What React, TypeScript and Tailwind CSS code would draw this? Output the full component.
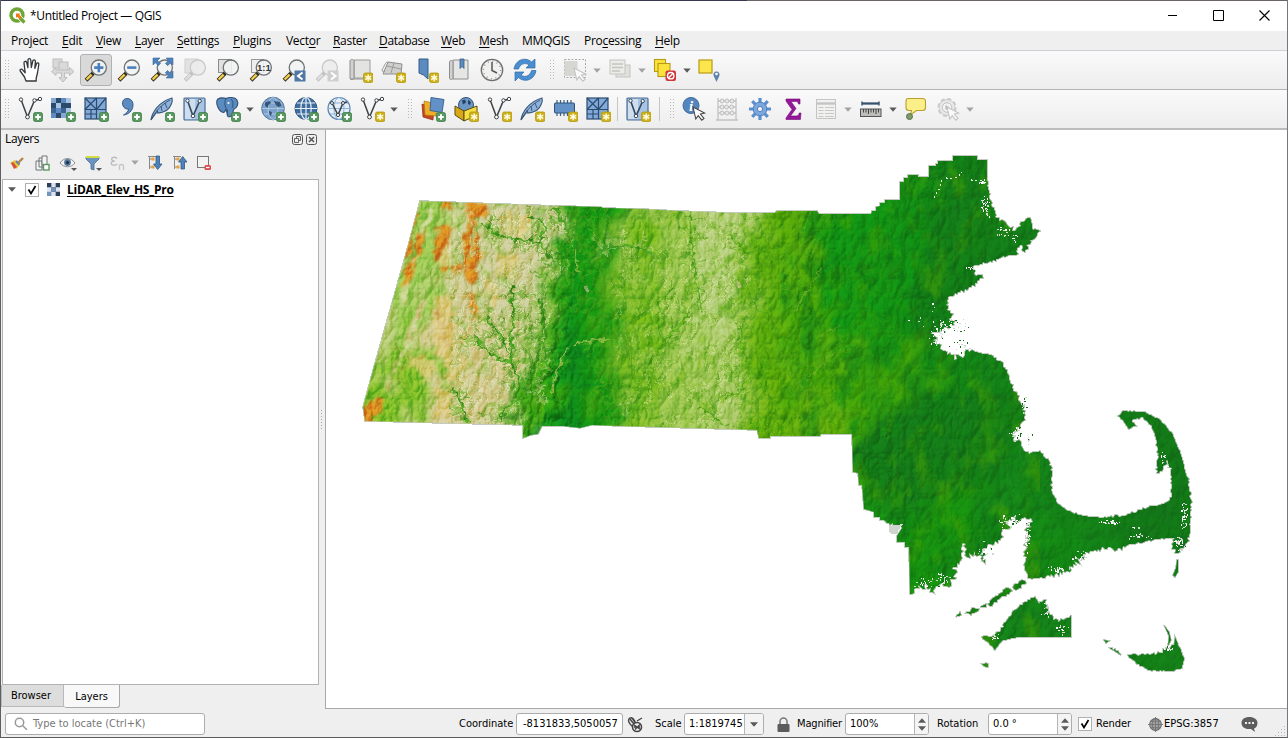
import React from "react";

/* ---------- small drawing helpers ---------- */
type P = { children?: React.ReactNode };
const Ico = ({ children }: P) => (
  <svg width="26" height="26" viewBox="0 0 26 26" fill="none" className="shrink-0">{children}</svg>
);
const Plus = () => (
  <g>
    <rect x="16.5" y="16.5" width="9" height="9" rx="1.8" fill="#5a9a62" stroke="#3f7d49" strokeWidth=".8" />
    <path d="M21 18.2v5.6M18.2 21h5.6" stroke="#fff" strokeWidth="2" />
  </g>
);
const Star = () => (
  <g>
    <rect x="16.5" y="16" width="9.5" height="9.5" rx="1.8" fill="#cdb01a" stroke="#b3980c" strokeWidth=".8" />
    <path d="M21.2 17.4v6.8M18.2 19.1l6 3.4M24.2 19.1l-6 3.4" stroke="#fffbe0" strokeWidth="1.5" />
  </g>
);
const Lens = ({ dim }: { dim?: boolean }) => (
  <g>
    <path d="M10.2 16.2L3 23.2" stroke={dim ? "#c4c4c4" : "#3b3420"} strokeWidth="4" />
    <path d="M8.6 17.6L3.6 22.5" stroke={dim ? "#dedede" : "#f2cf4b"} strokeWidth="2.4" />
    <path d="M11.2 15.2l-2 2" stroke={dim ? "#bbb" : "#222"} strokeWidth="2.6" />
    <circle cx="15.8" cy="10.6" r="7.6" fill={dim ? "#ececec" : "#f1f3f2"} fillOpacity=".88" stroke={dim ? "#c9c9c9" : "#6e7274"} strokeWidth="1.3" />
  </g>
);
const VNodes = ({ c = "#3d4246" }: { c?: string }) => (
  <g stroke={c}>
    <path d="M4 3.5L10.5 21L17.5 4.5L23 3.2" strokeWidth="1.5" />
    <g fill="#fff" strokeWidth="1"><circle cx="4" cy="3.6" r="1.7" /><circle cx="17.5" cy="4.4" r="1.7" /><circle cx="23" cy="3" r="1.7" /><circle cx="10.5" cy="21" r="1.9" /></g>
  </g>
);
const Checker = () => (
  <g>
    <rect x="1" y="2" width="20" height="20" fill="#86a8d2" />
    <path d="M6 2h5v5H6zM1 7h5v5H1zM11 7h5v5h-5zM6 17h5v5H6zM16 7h5v5h-5z" fill="#2c4a6c" />
    <path d="M11 2h5v5h-5zM6 12h5v5H6zM1 17h5v5H1z" fill="#5d8bc2" />
    <path d="M6 7h5v5H6zM16 12h5v5h-5zM16 2h5v5h-5z" fill="#a9c3e3" />
    <path d="M1 12h5v5H1zM11 12h5v5h-5z" fill="#3d6594" />
  </g>
);
const Mesh = () => (
  <g stroke="#2b4c6f" strokeWidth="1.2">
    <rect x="2" y="2" width="21" height="21" fill="#82a9d8" />
    <path d="M2 13.5h21M13.5 2v21M2 2l11.5 11.5M13.5 2L2 13.5M13.5 13.5L23 2M8 13.5V23M2 18h11.5" />
  </g>
);
const Feather = () => (
  <g>
    <path d="M2 24C3 17 9 6 23 2c1 3-1 9-5 12-4 3-8 3-11 3z" fill="#8fb2dc" stroke="#3a5a7c" strokeWidth="1.1" />
    <path d="M2 24C7 15 12 9 21 4M8 14l1 3M12 10l1 5M16 7l2 5" stroke="#35506e" strokeWidth=".9" />
  </g>
);
const Globe = ({ fill = "#4c79ad", line = "#e5eefa" }: { fill?: string; line?: string }) => (
  <g>
    <circle cx="13" cy="12.5" r="11" fill={fill} stroke="#35597f" strokeWidth="1" />
    <g stroke={line} strokeWidth="1.2"><ellipse cx="13" cy="12.5" rx="5.2" ry="11" /><path d="M2 12.500h22M13 1.500v22M4 7h18M4 18h18" /></g>
  </g>
);
const VBox = () => (
  <g>
    <rect x="2" y="2" width="21" height="22" rx="1" fill="#a9c4e2" stroke="#4a6f97" strokeWidth="1.2" />
    <path d="M3 3h10v20H3z" fill="#cfdeee" />
    <path d="M5.500 4.500L11 20L17.500 5.500" stroke="#33485c" strokeWidth="1.6" />
    <g fill="#fff" stroke="#33485c"><circle cx="5.5" cy="4.7" r="1.7" /><circle cx="17.7" cy="5" r="1.7" /><circle cx="11" cy="20" r="1.8" /></g>
  </g>
);
const Pointer = ({ dim }: { dim?: boolean }) => (
  <path d="M12 11l2.8 12 2.4-3.4 3.6 4.6 2.2-1.8-3.6-4.4 4.2-1z" fill={dim ? "#fafafa" : "#fff"} stroke={dim ? "#c2c2c2" : "#444"} strokeWidth="1.1" />
);

const Hand = () => (
  <Ico>
    <path d="M9 24l-1.5-4L3.2 14c-.8-1.6 1.2-2.6 2.4-1.2l2.6 3L7 6c-.2-2 2.2-2.4 2.7-.5l1.2 5.2L11 3.200c0-2 2.600-2 2.800 0l.5 7.300L15.800 4c.4-1.800 2.700-1.400 2.600.4l-.6 7 1.700-4.600c.6-1.600 2.600-1 2.300.7L20.500 16l-1.300 5v3z" fill="#fff" stroke="#33383b" strokeWidth="1.3" strokeLinejoin="round" />
  </Ico>
);
const PanSel = () => (
  <Ico>
    <g stroke="#bdbdbd" fill="#d9d9d9" strokeWidth="1"><rect x="3" y="2" width="9" height="9" /><rect x="9" y="5" width="9" height="9" />
      <path d="M13 25l-4-4.500h2.500V16H6v2.500L1.500 14.500L6 10.500V13h13.500v-2.500l4.500 4-4.500 4V16H14.500v4.500H17z" /></g>
  </Ico>
);
const ZoomIn = () => (<Ico><Lens /><path d="M15.800 6v9.200M11.200 10.600h9.200" stroke="#4a7fbd" strokeWidth="2.600" /></Ico>);
const ZoomOut = () => (<Ico><Lens /><path d="M11.200 10.600h9.200" stroke="#4a7fbd" strokeWidth="2.600" /></Ico>);
const ZoomFull = () => (
  <Ico><Lens />
    <g fill="#4f82ba" stroke="#3d6a9c" strokeWidth=".6"><path d="M4 1h7L8.600 3.400l3 3-2.300 2.300-3-3L4 8z" /><path d="M24 1v7l-2.300-2.300-3 3-2.300-2.300 3-3L17 1z" /><path d="M24 21h-7l2.300-2.300-3-3 2.300-2.300 3 3L24 14z" /></g>
  </Ico>
);
const ZoomSel = () => (<Ico><rect x="3" y="2" width="13" height="14" fill="#e2e2e2" stroke="#cfcfcf" /><Lens dim /></Ico>);
const ZoomLayer = () => (<Ico><rect x="3.500" y="2.500" width="13" height="13" fill="#e0e0de" stroke="#8b8b8b" /><Lens /></Ico>);
const ZoomNative = () => (
  <Ico><rect x="3.500" y="2.500" width="12" height="13" fill="#eee" stroke="#999" /><Lens />
    <text x="15.900" y="14.200" textAnchor="middle" fontFamily="Liberation Sans, sans-serif" fontSize="9.500" fontWeight="bold" fill="#333">1:1</text></Ico>
);
const ZoomLast = () => (<Ico><Lens /><rect x="13.500" y="13.500" width="11" height="11" fill="#4f78a5" /><path d="M21.500 15.500l-4.500 3.500 4.500 3.500" stroke="#fff" strokeWidth="2" /></Ico>);
const ZoomNext = () => (<Ico><Lens dim /><rect x="13.500" y="13.500" width="11" height="11" fill="#cfcfcf" /><path d="M17 15.500l4.500 3.500-4.500 3.500" stroke="#fff" strokeWidth="2" /></Ico>);
const NewMap = () => (<Ico><path d="M7 3h16v18H7z" fill="#e3e3e1" stroke="#9b9b9b" /><path d="M3 4c0-2 4-2 4 0v17c0 2-4 2-4 0z" fill="#d2d2d0" stroke="#8e8e8e" /><path d="M3 22h13" stroke="#8e8e8e" /><Star /></Ico>);
const New3D = () => (<Ico><path d="M8 5l14 2-1 10-18 0z" fill="#cfcfcd" stroke="#8e8e8e" /><path d="M8 5c-3 0-4 5-6 8 0 2 2 2 3 1M7 9l14 3M14 6l-3 10" stroke="#9a9a9a" /><Star /></Ico>);
const NewBookmark = () => (<Ico><path d="M6 2h9v20l-4.500-4-4.500-2z" fill="#5c8bc0" stroke="#355d88" /><Star /></Ico>);
const Bookmarks = () => (<Ico><path d="M7 3h15v19H7z" fill="#e6e6e4" stroke="#8e8e8e" /><path d="M3.500 5c0-2 3.500-2 3.500 0v16c0 2-3.500 2-3.500 0z" fill="#d2d2d0" stroke="#8e8e8e" /><path d="M14 2h4v9.500l-2-2-2 2z" fill="#5c8bc0" stroke="#355d88" strokeWidth=".8" /></Ico>);
const Clock = () => (<Ico><circle cx="13" cy="13" r="10.700" fill="#f0f0ee" stroke="#6d6f70" strokeWidth="1.300" /><circle cx="13" cy="13" r="8.700" stroke="#9a9a9a" strokeDasharray="1 3.550" strokeWidth="1.500" /><path d="M13 5v8.500l5 2.500" stroke="#555" strokeWidth="1.500" /></Ico>);
const Refresh = () => (
  <Ico><g fill="#4a8ed0" stroke="#2d6aa8" strokeWidth=".7"><path d="M2 12C3 5 9 1 15 2.500c2 .5 3.500 1.500 4.500 2.500L23 2v9h-9l3-3C13 5 8 7 6.500 12z" /><path d="M24 13.500c-1 7-7 11-13 9.500-2-.5-3.500-1.500-4.500-2.500L3 24v-9h9l-3 3c4 3 9 1 10.500-4.500z" /></g></Ico>
);
const SelectDim = () => (<Ico><rect x="2.500" y="2.500" width="21" height="18" stroke="#aaa" strokeDasharray="2 1.500" /><rect x="2.500" y="4" width="13" height="15" fill="#d6d6d2" /><Pointer dim /></Ico>);
const FormDim = () => (<Ico><rect x="9" y="8" width="14" height="12" fill="#e0e0dc" stroke="#c4c4c0" /><rect x="3" y="3" width="15" height="14" fill="#ebebe8" stroke="#c4c4c0" /><path d="M5 7h11M5 10.500h11M5 14h8" stroke="#c4c4c0" strokeWidth="1.300" /></Ico>);
const Deselect = () => (
  <Ico><g fill="#fbe33c" stroke="#b79b16" strokeWidth="1.100"><rect x="2.500" y="2.500" width="11" height="12" /><rect x="6" y="6.500" width="12" height="13" /></g>
    <rect x="13.500" y="13.500" width="10.500" height="10.500" rx="2" fill="#d0353a" /><circle cx="18.700" cy="18.700" r="3.200" stroke="#fff" strokeWidth="1.400" /><path d="M16.500 21l4.500-4.500" stroke="#fff" strokeWidth="1.300" /></Ico>
);
const SelLoc = () => (<Ico><rect x="3" y="3" width="13" height="13" fill="#fde64b" stroke="#b79b16" strokeWidth="1.200" /><path d="M20.500 25l-2.800-6a3.100 3.100 0 1 1 5.600 0z" fill="#5f84a8" /><circle cx="20.500" cy="17" r="1.300" fill="#fff" /></Ico>);

const VPlus = () => (<Ico><VNodes /><Plus /></Ico>);
const VStar = () => (<Ico><VNodes /><Star /></Ico>);
const RasterPlus = () => (<Ico><Checker /><Plus /></Ico>);
const MeshPlus = () => (<Ico><Mesh /><Plus /></Ico>);
const MeshStar = () => (<Ico><Mesh /><Star /></Ico>);
const Comma = () => (<Ico><path d="M8 3.500c4-2.500 9.500 0 9 6C16.500 15.500 12 18.500 7.500 19c3-1.800 5-3.500 5-6C7.500 14 4.500 7 8 3.500z" fill="#5c8bc0" stroke="#355d88" /><Plus /></Ico>);
const FeatherPlus = () => (<Ico><Feather /><Plus /></Ico>);
const FeatherStar = () => (<Ico><Feather /><Star /></Ico>);
const VBoxPlus = () => (<Ico><VBox /><Plus /></Ico>);
const VBoxStar = () => (<Ico><VBox /><Star /></Ico>);
const Elephant = () => (
  <Ico><path d="M3 3c3-2 6-1 8-.5C14 1 20 1 22 4c2 4 0 8-3 9-1 1-1 2-1 4l-2 3c-3 2-4 0-4-3l-1-4c-1 3-2 4-4 3C3 14 0 6 3 3z" fill="#5c8bc0" stroke="#2f5278" strokeWidth="1.100" /><path d="M11 3c-2 3-1 7 0 9M16 3c3 3 2 7 1 9M12 13c1 2 0 5 1 6" stroke="#2f5278" /><circle cx="13.500" cy="7" r="1" fill="#fff" /><Plus /></Ico>
);
const GlobeMap = () => (
  <Ico><circle cx="13" cy="12.500" r="11.300" fill="#7ea3cb" stroke="#4f779f" /><g stroke="#b9d0e6" strokeWidth=".8"><ellipse cx="13" cy="12.500" rx="5" ry="11" /><path d="M2 12.500h22M4 7h18M4 18h18" /></g>
    <path d="M5 6.500l5-1.500 1 2-2.500 2-1 3-2.500-2.500zM14 5l6 1 1.500 4-3.500 1-2.500-2.500zM9 15l3 1-1 4-1.500-1z" fill="#35557a" /><Plus /></Ico>
);
const GlobePlus = () => (<Ico><Globe fill="#3f6d9d" line="#e8f0f8" /><Plus /></Ico>);
const GlobeV = () => (<Ico><circle cx="13" cy="12.500" r="11" fill="#e6eff7" stroke="#5d88b5" strokeWidth="1.200" /><g stroke="#8fb2d6"><ellipse cx="13" cy="12.500" rx="5" ry="11" /><path d="M2 12.500h22M4 7h18M4 18h18" /></g><path d="M6 7l6 12 5-12 4-1" stroke="#3a4248" strokeWidth="1.500" /><g fill="#fff" stroke="#3a4248"><circle cx="6" cy="7" r="1.500" /><circle cx="17" cy="7" r="1.500" /><circle cx="12" cy="19" r="1.600" /></g><Plus /></Ico>);
const Sources = () => (<Ico><path d="M2 8l12 3-1 13-10-3z" fill="#c8451f" stroke="#8b2d12" strokeWidth=".7" /><path d="M4 5l13 3-1 12-11-1z" fill="#f0ae28" stroke="#a77713" strokeWidth=".7" /><path d="M11 1.500l13 2-2 13-12-2z" fill="#6291c8" stroke="#355d88" strokeWidth=".9" /><Plus /></Ico>);
const Geopkg = () => (<Ico><circle cx="13" cy="9" r="7.500" fill="#6e97c6" stroke="#2f5278" /><path d="M9 4.500l3-1 1 3-3 2zM15 4l3 2-1 3-2-1z" fill="#24405f" /><path d="M2 10l9 5v10l-9-6z" fill="#d8a816" stroke="#5a4a10" /><path d="M11 15l13-5v9l-13 6z" fill="#f6de45" stroke="#5a4a10" /><Star /></Ico>);
const Chip = () => (<Ico><path d="M5 4v16M8.500 4v16M12 4v16M15.500 4v16M19 4v16" stroke="#3f5f80" strokeWidth="1.200" /><rect x="2.500" y="7" width="20" height="10" rx="1" fill="#6291c8" stroke="#2f5278" /><Star /></Ico>);
const Identify = () => (<Ico><circle cx="10" cy="9.500" r="8" fill="#5585bd" stroke="#3d6a9c" /><text x="10" y="14.800" textAnchor="middle" fontFamily="Liberation Serif, serif" fontStyle="italic" fontWeight="bold" fontSize="15" fill="#fff">i</text><Pointer /></Ico>);
const Abacus = () => (<Ico><path d="M4 2v22M22 2v22M2 24h22M4 5h18M4 11h18M4 17h18" stroke="#c2c2c2" strokeWidth="1.300" /><g fill="#e8e8e8" stroke="#bdbdbd"><circle cx="8" cy="5" r="2" /><circle cx="13" cy="5" r="2" /><circle cx="18" cy="5" r="2" /><circle cx="8" cy="11" r="2" /><circle cx="12.500" cy="11" r="2" /><circle cx="17.500" cy="11" r="2" /><circle cx="8" cy="17" r="2" /><circle cx="13" cy="17" r="2" /><circle cx="18" cy="17" r="2" /></g></Ico>);
const Gear = () => (
  <Ico><g stroke="#5c8fd0" strokeWidth="3.200"><path d="M13 2v22M2 13h22M5.200 5.200l15.600 15.600M20.800 5.200L5.200 20.800" /></g><circle cx="13" cy="13" r="6.900" fill="#7ba7de" stroke="#4f80bd" /><circle cx="13" cy="13" r="2.600" fill="#f4f4f4" stroke="#4f80bd" /></Ico>
);
const Sigma = () => (<Ico><path d="M6 3h14v5h-1.500c-.3-2-1-2.500-3-2.500H11l5 7-5.500 7.500H16c2 0 2.800-.8 3.200-3H21l-.6 6.500H6V22l6-8.500L6 5z" fill="#97179b" stroke="#6e0f73" strokeWidth=".6" /></Ico>);
const TableDim = () => (<Ico><rect x="3.500" y="3.500" width="19" height="19" fill="#f1f1f0" stroke="#c4c4c4" /><path d="M3.500 7.500h19" stroke="#c4c4c4" strokeWidth="2.400" /><path d="M5.500 11.500h5M12 11.500h9M5.500 14.500h5M12 14.500h9M5.500 17.500h5M12 17.500h9M5.500 20.500h5M12 20.500h9" stroke="#c8c8c8" /></Ico>);
const Ruler = () => (<Ico><path d="M4 7.500h17M4 5.500v4M21 5.500v4" stroke="#36516e" strokeWidth="1.400" /><path d="M4 7.500h17" stroke="#36516e" strokeWidth="2" /><rect x="2.500" y="13" width="20.500" height="7.500" fill="#bdbdbb" stroke="#555" /><path d="M5.500 13v3.500M8 13v3.500M10.500 13v5M13 13v3.500M15.500 13v3.500M18 13v5M20.500 13v3.500" stroke="#444" /></Ico>);
const Tip = () => (<Ico><path d="M6 2.500h14.500c2 0 3 1 3 3v6c0 2-1 3-3 3h-6L8.500 19l1-4.500H7c-2 0-3-1-3-3v-6c0-2 0-3 2-3z" fill="#fbef8a" stroke="#b9a02c" strokeWidth="1.100" /><circle cx="7.500" cy="20.500" r="3" fill="#7d9b6c" stroke="#55744a" /></Ico>);
const GearDim = () => (<Ico><circle cx="12" cy="11.500" r="8.500" fill="#e6e6e6" stroke="#cacaca" strokeWidth="2.200" strokeDasharray="4 2.670" /><circle cx="12" cy="11.500" r="7.800" fill="#e9e9e9" stroke="#c9c9c9" strokeWidth=".8" /><circle cx="12" cy="11.500" r="4.800" fill="#f3f3f3" stroke="#bfbfbf" /><path d="M10.500 9l4 2.500-4 2.500z" fill="#b5b5b5" /><Pointer dim /></Ico>);

/* ---------- toolbar pieces ---------- */
const Slot = ({ children, on }: P & { on?: boolean }) => (
  <div className="flex h-[34px] w-[33px] shrink-0 items-center justify-center">
    <div className={on ? "flex h-8 w-8 items-center justify-center rounded-[3px] border border-[#b1b1b1] bg-[#d9d9d9]" : "flex h-8 w-8 items-center justify-center"}>{children}</div>
  </div>
);
const Arrow = ({ w, dim }: { w: string; dim?: boolean }) => (
  <div className={`flex shrink-0 justify-center ${w}`}>
    <svg width="8" height="5" viewBox="0 0 8 5"><path d="M.3.500h7.400L4 4.700z" fill={dim ? "#a3a3a3" : "#5a5a5a"} /></svg>
  </div>
);
const Grip = ({ w }: { w: string }) => (
  <div className={`flex shrink-0 justify-center ${w}`}>
    <svg width="5" height="20" viewBox="0 0 5 20">
      {Array.from({ length: 7 }, (_, i) => <path key={i} d={`M0 ${i * 3}h1v1H0zM3 ${i * 3}h1v1H3z`} fill="#b8b8b8" />)}
    </svg>
  </div>
);
const Sep = ({ w }: { w: string }) => (<div className={`flex shrink-0 justify-center ${w}`}><div className="h-6 w-px bg-[#c6c6c6]" /></div>);

/* ---------- terrain ---------- */
function rng(seed: number) {
  let a = seed;
  return () => {
    a = (a + 0x6d2b79f5) | 0;
    let t = Math.imul(a ^ (a >>> 15), 1 | a);
    t = (t + Math.imul(t ^ (t >>> 7), 61 | t)) ^ t;
    return ((t ^ (t >>> 14)) >>> 0) / 4294967296;
  };
}
type Pt = number[];
/* third number of a point: how ragged the edge that follows it is */
function outline(pts: Pt[], seed: number) {
  const r = rng(seed);
  let d = "";
  pts.forEach((p, i) => {
    const q = pts[(i + 1) % pts.length];
    d += (i ? "L" : "M") + p[0] + " " + p[1];
    const amp = p[2] || 0;
    if (!amp) return;
    const dx = q[0] - p[0], dy = q[1] - p[1], len = Math.hypot(dx, dy);
    const n = Math.floor(len / 1.7);
    for (let k = 1; k < n; k++) {
      const o = (r() - 0.5) * 2 * amp, t = k / n;
      d += "L" + Math.round(p[0] + dx * t - (dy / len) * o) + " " + Math.round(p[1] + dy * t + (dx / len) * o);
    }
  });
  return d + "Z";
}
const mainland: Pt[] = [
  [420, 201], [530, 205], [601, 207], [603, 208], [643, 209], [680, 211], [735, 213], [775, 213], [777, 211], [817, 211], [819, 214], [871, 214], [872, 211], [876, 211], [876, 207], [880, 206], [880, 203], [885, 203], [885, 200], [900, 200], [900, 182], [904, 182], [904, 178], [908, 178], [908, 175], [918, 175], [918, 177], [929, 177], [929, 166], [936, 166], [936, 164], [938, 164], [938, 161], [953, 161], [953, 156], [977, 156], [977, 160], [987, 160],
  [987, 180, 1], [990, 200, 1.5], [997, 218, 2], [1007, 225, 2], [1015, 231, 2], [1021, 222, 1], [1030, 218, 1], [1032, 228, 2], [1040, 231, 1.5], [1036, 237, 2], [1030, 240, 2], [1025, 252, 2], [1020, 245, 2], [1016, 255, 1], [1000, 258, 1.2], [987, 263, 1.5], [970, 267, 2], [974, 274, 1.5], [982, 275, 2], [977, 283, 1.5], [967, 290, 1.5], [955, 293, 2], [948, 299, 2.5], [950, 313, 4], [954, 325, 4], [937, 328, 4], [933, 340, 4], [947, 352, 4], [957, 359, 4], [968, 350, 2], [977, 352, 1], [993, 356, 1.5], [1003, 363, 1.5], [1008, 374, 1], [1010, 383, 1.5], [1017, 395, 1.5], [1024, 408, 2.5], [1025, 420, 2], [1012, 434, 3], [1023, 449, 2], [1031, 453, 0.5], [1040, 451, 1], [1049, 461, 1], [1052, 473, 1], [1051, 490, 1], [1057, 503, 0.8], [1068, 511, 0.8], [1083, 516, 0.6], [1103, 518, 1.2], [1127, 515, 1], [1147, 508, 1], [1167, 502, 1], [1172, 497, 1], [1171, 470, 2], [1167, 460, 1.5], [1162, 471, 1], [1157, 473, 1], [1158, 450, 0.8], [1156, 437, 0.8], [1151, 425, 0.8], [1143, 417, 0.8], [1132, 420, 1], [1136, 426, 0.6], [1129, 429, 0.6], [1124, 422, 0.6], [1118, 416, 0.5], [1123, 411, 0.3], [1143, 412, 0.5], [1160, 420, 0.5], [1172, 433, 0.5], [1180, 453, 0.5], [1187, 477, 1.5], [1191, 507, 1], [1190, 533, 1.5], [1187, 542, 2], [1178, 553, 3], [1173, 546, 2], [1175, 538, 1], [1153, 540, 1], [1133, 544, 2], [1117, 550, 3], [1112, 548, 2], [1090, 551, 3], [1080, 559, 4], [1067, 571, 2.5], [1050, 576, 1.5], [1028, 578, 1.5], [1025, 570, 2], [1026, 543, 4], [1031, 518, 4], [1020, 520, 4], [1009, 519, 4], [1003, 537, 4], [988, 544, 2], [982, 552, 3], [985, 563, 3], [974, 551, 3], [967, 557, 2], [963, 541, 1], [961, 560, 3], [953, 567, 3], [956, 578, 3], [946, 586, 3], [936, 586, 2], [934, 593, 3], [926, 584, 4], [912, 594], [910, 594], [909, 547], [905, 547], [905, 542], [897, 542], [897, 536], [902, 528, 2], [889, 523, 1], [884, 520], [880, 520], [880, 517], [874, 517], [874, 512], [864, 509], [862, 485], [859, 485], [858, 473], [853, 472], [852, 434], [821, 434], [820, 436], [770, 436], [770, 438], [759, 438], [757, 430], [690, 428], [620, 426], [592, 425], [580, 428], [563, 426], [542, 426], [538, 434], [531, 435], [523, 438], [523, 425], [365, 421], [363, 407], [375, 363], [405, 257],
];
const islands: Pt[][] = [
  [[1035, 597, 1], [1039, 604, 1.5], [1046, 600, 2], [1047, 613, 2], [1058, 622, 2], [1064, 620, 1], [1071, 615], [1071, 637, 0.5], [1020, 637, 0.5], [1003, 640, 1], [995, 650, 1], [990, 645, 1], [982, 637, 0.8], [993, 636, 2], [1001, 630, 1], [1007, 620, 0.8], [1015, 610, 0.8], [1025, 602, 1]],
  [[1128, 655, 1.2], [1157, 654, 2.5], [1170, 648, 1], [1177, 642, 0.5], [1184, 658, 0.5], [1182, 668, 0.5], [1174, 671, 0.5], [1150, 670, 0.5], [1137, 664, 0.5]],
  [[988, 604, 1.2], [995, 597, 1.2], [1008, 588, 1.2], [1012, 591, 1.2], [999, 599, 1.2], [990, 606, 1]],
  [[1013, 587, 1], [1022, 580, 1.5], [1026, 583, 1], [1016, 590, 1]],
  [[966, 613, 1], [974, 608, 1], [979, 609, 1], [971, 615, 1]],
  [[956, 617, 1], [960, 612, 1], [961, 615, 1]],
  [[980, 607, 0.5], [986, 604, 0.5], [986, 607, 0.5]],
  [[982, 664, 1], [988, 664, 1], [988, 667, 1]],
  [[1173, 575], [1176, 568], [1177, 560], [1178, 560], [1178, 572], [1175, 577]],
  [[1164, 625], [1169, 632], [1171, 640], [1168, 646], [1169, 636]],
  [[1175, 637], [1178, 644], [1174, 646]],
  [[1104, 640], [1109, 641], [1106, 643]],
  [[1110, 648, 1], [1118, 651, 1], [1121, 655, 0.5]],
];
const landPath = outline(mainland, 7) + islands.map((p, i) => outline(p, 20 + i)).join("");

/* a river and its side branches */
function tree(pts: Pt[], seed: number, reach: number, gap = 4) {
  const r = rng(seed);
  let d = "M" + pts.map((p) => p.join(" ")).join("L");
  const grow = (x: number, y: number, a: number, n: number, depth: number) => {
    d += `M${x.toFixed(1)} ${y.toFixed(1)}`;
    for (let i = 0; i < n; i++) {
      a += (r() - 0.5) * 0.9;
      x += Math.cos(a) * 2.5; y += Math.sin(a) * 2.5;
      d += `L${x.toFixed(1)} ${y.toFixed(1)}`;
      if (depth > 0 && r() < 0.3) {
        grow(x, y, a + (r() < 0.5 ? -0.8 : 0.8), Math.ceil(n * 0.5), depth - 1);
        d += `M${x.toFixed(1)} ${y.toFixed(1)}`;
      }
    }
  };
  for (let i = 0; i < pts.length - 1; i++) {
    const [x1, y1] = pts[i], [x2, y2] = pts[i + 1];
    const len = Math.hypot(x2 - x1, y2 - y1), a = Math.atan2(y2 - y1, x2 - x1);
    for (let s = 0; s < len; s += gap) grow(x1 + ((x2 - x1) * s) / len, y1 + ((y2 - y1) * s) / len, a + (r() < 0.5 ? -1 : 1) * (1.8 + r() * 0.6), 1 + Math.floor((r() * reach) / 2.5), 1);
  }
  return d;
}
const rivers = [
  [[482, 222], [493, 232], [506, 238], [517, 240], [528, 239], [540, 243], [550, 257], [558, 264], [566, 274]],
  [[540, 241], [546, 228], [540, 221], [527, 216]],
  [[557, 210], [562, 220], [568, 230], [570, 243]],
  [[475, 337], [483, 347], [492, 354], [503, 360], [512, 364], [518, 378], [524, 392]],
  [[513, 285], [512, 300], [514, 318], [511, 340], [512, 364]],
  [[487, 318], [493, 328], [500, 335], [508, 350]],
  [[653, 252], [640, 248], [625, 246], [613, 245], [604, 250], [594, 260]],
  [[541, 300], [544, 320], [540, 345], [534, 370]],
  [[455, 390], [462, 403], [468, 421]],
  [[500, 421], [506, 408], [520, 398]],
];
const eastRivers = [
  [[690, 313], [680, 325], [668, 338], [654, 355], [643, 375]],
  [[691, 212], [692, 250], [698, 290], [702, 312]],
  [[730, 235], [745, 252], [760, 250], [774, 266], [785, 280]],
  [[600, 382], [620, 384], [638, 388], [652, 391], [652, 368]],
  [[700, 408], [715, 418], [726, 427]],
  [[752, 300], [768, 320], [776, 342], [790, 362], [800, 385], [804, 425]],
  [[737, 395], [750, 375], [765, 358], [790, 362]],
  [[740, 330], [745, 355], [758, 380]],
  [[662, 340], [657, 320], [660, 300], [672, 290]],
  [[806, 220], [800, 250], [795, 280], [790, 310]],
  [[800, 385], [815, 360], [835, 352], [850, 350]],
  [[628, 330], [632, 360], [636, 400], [640, 424]],
];
/* sides of the broad valleys, where many short streams drain in */
const valleySides = [
  [[572, 208], [568, 240], [566, 275], [558, 305], [545, 345], [530, 385], [522, 424]],
  [[607, 208], [602, 240], [600, 280], [603, 320], [612, 350], [613, 424]],
];
const basinSides = [
  [[645, 212], [648, 250], [645, 290], [636, 340], [638, 400]],
  [[757, 215], [755, 260], [750, 310], [742, 360], [748, 425]],
];
const line = (p: Pt[]) => "M" + p.map((q) => q.join(" ")).join("L");
const westInk = rivers.map((p, i) => tree(p, 40 + i, 15, 3)).join("");
const eastInk = eastRivers.map((p, i) => tree(p, 70 + i, 14, 5)).join("");
const valleyInk = valleySides.map((p, i) => tree(p, 90 + i, 24, 2.5)).join("");
const basinInk = basinSides.map((p, i) => tree(p, 95 + i, 26, 3)).join("");
function scatter(seed: number, n: number, x0: number, x1: number, y0: number, y1: number) {
  const r = rng(seed);
  let d = "";
  for (let i = 0; i < n; i++) {
    const x = x0 + r() * (x1 - x0), y = y0 + r() * (y1 - y0);
    d += tree([[x, y], [x + (r() - 0.5) * 8, y + 6 + r() * 10]], seed * 100 + i, 7, 4);
  }
  return d;
}
const fineWest = scatter(2, 130, 452, 545, 210, 420);
const fineMid = scatter(3, 160, 615, 745, 215, 420);
const fineEast = scatter(4, 150, 755, 900, 220, 430);

/* marsh and inlet pixels: centre, spread, count */
const marsh = [[985, 205, 5, 14, 40], [1003, 230, 8, 6, 22], [1015, 238, 3, 8, 12], [952, 325, 22, 10, 60], [960, 345, 14, 8, 40], [938, 335, 10, 12, 34], [1023, 405, 3, 9, 14], [1016, 433, 8, 9, 24], [1027, 440, 8, 8, 14], [1010, 522, 16, 9, 44], [1027, 535, 4, 18, 40], [1184, 515, 5, 16, 60], [1180, 543, 7, 8, 60], [1108, 522, 13, 2, 30], [1140, 536, 20, 3, 22], [925, 582, 13, 6, 36], [943, 578, 9, 8, 26], [985, 550, 10, 10, 20], [1060, 568, 16, 6, 28], [1080, 556, 12, 6, 24], [1062, 630, 8, 6, 20], [1045, 610, 4, 9, 16], [1168, 648, 8, 3, 20], [995, 638, 6, 6, 14], [928, 306, 26, 24, 8], [1132, 527, 8, 2, 8], [970, 268, 8, 3, 12], [1163, 460, 4, 12, 14], [982, 182, 4, 1, 24]];
const specks = (() => {
  const r = rng(99);
  return marsh.flatMap(([x, y, sx, sy, n]) => Array.from({ length: n }, () => ({
    x: Math.round(x + (r() + r() - 1) * sx), y: Math.round(y + (r() + r() - 1) * sy),
    w: r() < 0.3 ? 2 : 1, h: r() < 0.3 ? 2 : 1, f: r() < 0.45 ? "#fff" : r() < 0.65 ? "#cdd6cc" : "#14701a",
  })));
})();

const Terrain = () => (
  <svg viewBox="326 130 960 578" width="960" height="578" className="block">
    <defs>
      <clipPath id="land"><path d={landPath} /></clipPath>
      <linearGradient id="base" gradientUnits="userSpaceOnUse" x1="363" x2="1000" y1="0" y2="0">
        <stop offset="0" stopColor="#b4cb70" /><stop offset=".1" stopColor="#c2cc84" /><stop offset=".16" stopColor="#d1cc96" /><stop offset=".26" stopColor="#c6cb92" />
        <stop offset=".3" stopColor="#8cbc44" /><stop offset=".34" stopColor="#2c9a10" /><stop offset=".37" stopColor="#4fa810" /><stop offset=".41" stopColor="#8dbf40" />
        <stop offset=".5" stopColor="#9cc650" /><stop offset=".58" stopColor="#aecb6c" /><stop offset=".63" stopColor="#7eb822" /><stop offset=".68" stopColor="#4da60c" />
        <stop offset=".76" stopColor="#219a10" /><stop offset=".85" stopColor="#128c14" /><stop offset="1" stopColor="#148018" />
      </linearGradient>
      <linearGradient id="fade" gradientUnits="userSpaceOnUse" x1="363" x2="1100" y1="0" y2="0">
        <stop offset="0" stopColor="#fff" /><stop offset=".26" stopColor="#eee" /><stop offset=".29" stopColor="#666" /><stop offset=".33" stopColor="#777" /><stop offset=".37" stopColor="#ddd" /><stop offset=".52" stopColor="#ccc" /><stop offset=".68" stopColor="#666" /><stop offset="1" stopColor="#333" />
      </linearGradient>
      <mask id="fadeMask"><rect x="326" y="129" width="960" height="579" fill="url(#fade)" /></mask>
      <filter id="soft" filterUnits="userSpaceOnUse" x="326" y="129" width="960" height="579" colorInterpolationFilters="sRGB">
        <feTurbulence type="fractalNoise" baseFrequency=".04" numOctaves="5" seed="4" result="n" />
        <feDisplacementMap in="SourceGraphic" in2="n" scale="100" xChannelSelector="R" yChannelSelector="G" />
        <feGaussianBlur stdDeviation="4" />
      </filter>
      <filter id="mid" filterUnits="userSpaceOnUse" x="326" y="129" width="400" height="340" colorInterpolationFilters="sRGB">
        <feTurbulence type="fractalNoise" baseFrequency=".12" numOctaves="3" seed="9" result="n" />
        <feDisplacementMap in="SourceGraphic" in2="n" scale="14" xChannelSelector="R" yChannelSelector="G" />
        <feGaussianBlur stdDeviation="1.100" />
      </filter>
      <filter id="line" filterUnits="userSpaceOnUse" x="326" y="129" width="960" height="579" colorInterpolationFilters="sRGB">
        <feTurbulence type="fractalNoise" baseFrequency=".16" numOctaves="2" seed="3" result="n" />
        <feDisplacementMap in="SourceGraphic" in2="n" scale="9" xChannelSelector="R" yChannelSelector="G" />
        <feGaussianBlur stdDeviation=".6" />
      </filter>
      <filter id="relief" x="0" y="0" width="100%" height="100%" colorInterpolationFilters="sRGB">
        <feTurbulence type="turbulence" baseFrequency=".075 .05" numOctaves="4" seed="12" />
        <feColorMatrix values="0 0 0 0 0 0 0 0 0 0 0 0 0 0 0 1 0 0 0 0" />
        <feGaussianBlur stdDeviation=".6" />
        <feDiffuseLighting surfaceScale="5" diffuseConstant=".76" lightingColor="#fff"><feDistantLight azimuth="225" elevation="44" /></feDiffuseLighting>
      </filter>
      <filter id="valleys" x="0" y="0" width="100%" height="100%" colorInterpolationFilters="sRGB">
        <feTurbulence type="turbulence" baseFrequency=".035 .022" numOctaves="4" seed="21" />
        <feColorMatrix values="0 0 0 0 .44  0 0 0 0 .7  0 0 0 0 .08  -6 0 0 0 1.400" />
      </filter>
      <filter id="mottle" x="0" y="0" width="100%" height="100%" colorInterpolationFilters="sRGB">
        <feTurbulence type="fractalNoise" baseFrequency=".045 .03" numOctaves="5" seed="31" />
        <feColorMatrix values="0 0 0 0 .33  0 0 0 0 .66  0 0 0 0 0  4.500 0 0 0 -2.200" />
      </filter>
      <filter id="mottleDark" x="0" y="0" width="100%" height="100%" colorInterpolationFilters="sRGB">
        <feTurbulence type="fractalNoise" baseFrequency=".05 .035" numOctaves="5" seed="77" />
        <feColorMatrix values="0 0 0 0 .07  0 0 0 0 .49  0 0 0 0 .08  5 0 0 0 -2.400" />
      </filter>
    </defs>
    <path d={landPath} fill="none" stroke="#c3cbc1" strokeWidth="1.600" shapeRendering="crispEdges" />
    <g clipPath="url(#land)" className="isolate">
      <rect x="326" y="129" width="960" height="579" fill="url(#base)" />
      <g filter="url(#soft)">
        <path d="M418 190l34 0-6 50-18 45-4 55 12 30-4 60h-80l30-80 18-90z" fill="#98c850" />
        <path d="M378 340l40 0 16 90h-68z" fill="#80be28" />
        <path d="M440 300l30-10 40 60 14 85h-80l-12-70z" fill="#d3c98e" />
        <path d="M470 190h88v50l-20 60-60 5z" fill="#cdcc96" />
        <path d="M562 180h62l-24 76 12 60 6 130h-112l10-66 28-50 18-60-4-80z" fill="#379f10" />
        <path d="M574 180h40l-14 76 4 60-2 130h-56l6-66 12-70z" fill="#129412" />
        <path d="M566 300l14 30 4 120h-30z" fill="#0f861e" opacity=".8" />
        <path d="M638 225h24l-2 55-6 60-4 100h-26l10-110z" fill="#66b20e" />
        <path d="M694 190h58l-8 80-6 50-30 60-20-70z" fill="#b7d07e" />
        <path d="M690 350l40-20 10 60-30 30z" fill="#a9cb66" opacity=".7" />
        <path d="M764 180h30l60 80-10 200h-96l6-100-8-70z" fill="#58a90c" opacity=".85" />
        <path d="M800 320l50 40-10 110h-90l-10-50z" fill="#68ae0e" opacity=".8" />
        <path d="M785 290l30 20 20 60-24 60-26-70z" fill="#38a00e" opacity=".7" />
        <path d="M845 180l40 20 30 60-20 60-60 20-30-60z" fill="#119414" />
        <path d="M860 420l100-40 70 10-10 80-60 60-50-10-60-40z" fill="#147a18" />
        <path d="M850 370l70-20 10 40-70 40z" fill="#359e0e" />
        <path d="M920 500l40-20 20 30-40 90-34 6z" fill="#17920f" />
        <path d="M940 150l60 10 30 80-70 60-30 60-20-40z" fill="#137c18" />
        <path d="M1000 440l40 10 6 50-40 20z" fill="#16881a" />
        <path d="M1040 520h40l20 10-40 60h-30z" fill="#158c14" />
        <path d="M1110 490h90v80l-80-10zM1120 390l50 20 40 100h-40z" fill="#137618" />
      </g>
      <rect x="430" y="195" width="115" height="235" filter="url(#valleys)" opacity=".5" />
      <rect x="612" y="200" width="160" height="235" filter="url(#valleys)" opacity=".6" />
      <rect x="740" y="129" width="300" height="579" filter="url(#mottle)" opacity=".4" />
      <rect x="780" y="129" width="506" height="579" filter="url(#mottleDark)" opacity=".6" />
      <g filter="url(#mid)">
        <g fill="#dcc878" opacity=".8">
          <path d="M434 300l15-8 12 40 10 34-18 6-20-30zM408 360l16-8 14 16-14 12zM486 280l10 4-2 32-8-20zM498 252l22 6-4 20-18-2zM438 350l12 2 14 34-16-6zM500 213l34 4-10 20-22-4zM436 390l14 0 2 26-16 0zM440 240l10-12-2 30-10 20z" />
        </g>
        <g fill="none" stroke="#ddd9a8" strokeWidth="5" opacity=".8"><path d="M426 235l-10 20-14 50M424 300l-20 50-16 30M455 215l-6 50M432 210l-16 30" /></g>
        <g fill="#da8c20">
          <path d="M438 228l10-5 2 12-6 16-8 12-3-10 4-14zM467 202h19l-2 14-9 3 3 22 4 12-4 12-12-2-3-14 4-24zM441 267l7 1-5 9zM452 265l11-2-1 10-8 2zM464 265l11-2 4 14-7 8-7-6zM468 294l8 2 2 24-7-8zM416 234l9-3-4 24-7 4zM414 208l5 2-8 30-5 22-4-4zM402 268l15-9-4 16-12 16zM442 202h12l-3 9h-8zM363 405l5-4 8 0 0 8-4 14h-10zM377 397l7 2-3 16-5-2z" />
        </g>
        <g fill="none" stroke="#b9642a" strokeWidth="1.400" opacity=".55"><path d="M447 226l-5 20-5 14M472 205l-2 30 4 26M409 225l-8 34M475 266l2 14M419 236l-3 18" /></g>
        <g fill="none" stroke="#c99a5c" strokeWidth="1.600" opacity=".7"><path d="M424 300l-10 20-12 24M400 350l-12 40M450 318l16 40M437 310l10 36M406 356l-8 26M414 330l-4 30" /></g>
      </g>
      <g fill="none" strokeLinecap="round" filter="url(#line)">
        <g transform="translate(1.300 1.300)" stroke="#eceac2" strokeWidth="1" opacity=".55"><path d={fineWest} /><path d={westInk} /></g>
        <path d={fineMid} transform="translate(1.300 1.300)" stroke="#d6e4a0" strokeWidth="1" opacity=".45" />
        <path d={fineWest} stroke="#a2b862" strokeWidth="1" opacity=".6" />
        <path d={fineMid} stroke="#7fb42e" strokeWidth="1.100" opacity=".6" />
        <path d={fineEast} stroke="#2f9610" strokeWidth="1.300" opacity=".45" />
        <path d={valleyInk} stroke="#4ba31c" strokeWidth="1.500" opacity=".6" />
        <path d={basinInk} stroke="#66ae16" strokeWidth="1.400" opacity=".55" />
        <path d={westInk} stroke="#76ae36" strokeWidth="1.300" opacity=".75" />
        <path d={rivers.map(line).join("")} stroke="#429c1c" strokeWidth="2" strokeLinejoin="round" opacity=".9" />
        <path d={eastInk} stroke="#58a616" strokeWidth="1.400" opacity=".55" />
        <path d={eastRivers.map(line).join("")} stroke="#46a010" strokeWidth="1.600" opacity=".6" />
        <path d="M575 241l1 40-6 50 4 30-2 45 8 18M609 212l-6 36-14 14M524 388l20 8 22 10M575 386l26-2" stroke="#0e7d22" strokeWidth="2" opacity=".5" />
        <path d="M575 345l8-4 26-1M567 348l-10 25-6 20M576 250l2 22" stroke="#9fc050" strokeWidth="1.800" opacity=".8" />
        <path d="M822 268l-28 44M838 326l-18 10M832 355l-24 22" stroke="#8fbe30" strokeWidth="1.400" opacity=".5" />
        <path d="M586 288l1 2M738 283l1 2" stroke="#dcc8a8" strokeWidth="5" opacity=".6" />
      </g>
      <g mask="url(#fadeMask)" className="mix-blend-overlay"><rect x="326" y="129" width="960" height="579" filter="url(#relief)" opacity=".42" /></g>
    </g>
    <g shapeRendering="crispEdges">
      <path d="M889 526l14-2-5 7v3h-7l-2-3z" fill="#cfd5ce" />
      {specks.map((s, i) => <rect key={i} x={s.x} y={s.y} width={s.w} height={s.h} fill={s.f} />)}
      <path d="M934 198l2-4 3-4 3-11h1M946 178l7 1 6-3 3-4M971 180l8 1 6-1" fill="none" stroke="#e4efe2" strokeWidth="1.200" strokeDasharray="2 2.500" />
    </g>
  </svg>
);

/* ---------- chrome ---------- */
const menus: [string, string, string, string][] = [
  ["Pro", "j", "ect", "w-[51px]"], ["", "E", "dit", "w-[34px]"], ["", "V", "iew", "w-[39px]"], ["", "L", "ayer", "w-[42px]"], ["", "S", "ettings", "w-[56px]"], ["", "P", "lugins", "w-[53px]"],
  ["Vect", "o", "r", "w-[47px]"], ["", "R", "aster", "w-[46px]"], ["", "D", "atabase", "w-[62px]"], ["", "W", "eb", "w-[38px]"], ["", "M", "esh", "w-[43px]"], ["MMQGIS", "", "", "w-[62px]"], ["Pro", "c", "essing", "w-[71px]"], ["", "H", "elp", "w-[40px]"],
];
const Spin = () => (
  <span className="flex h-full w-[14px] flex-col items-center justify-center gap-[3px] border-l border-[#b5b5b5] bg-[#f4f4f4]">
    <svg width="8" height="5"><path d="M0 4.700h8L4 .3z" fill="#5a5a5a" /></svg>
    <svg width="8" height="5"><path d="M0 .3h8L4 4.700z" fill="#5a5a5a" /></svg>
  </span>
);
const Check = () => (
  <span className="flex h-[14px] w-[14px] shrink-0 items-center justify-center border border-[#b0b0b0] bg-white">
    <svg width="10" height="10" viewBox="0 0 10 10"><path d="M1.500 4.500l2.500 4L8.500 1" fill="none" stroke="#000" strokeWidth="1.700" /></svg>
  </span>
);
const PIco = ({ children }: P) => (<svg width="18" height="18" viewBox="0 0 18 18" fill="none" className="shrink-0">{children}</svg>);

export default function App() {
  return (
    <div className="flex h-[738px] w-[1288px] flex-col overflow-hidden border-b border-l border-r border-b-[#5c5c5c] border-l-[#5e5e66] border-r-[#77777b] bg-[#efefef] font-['Open_Sans','Noto_Sans',sans-serif] text-[12px] text-black">
      <div className="h-px shrink-0 bg-linear-to-r from-[#36384f] from-58% to-[#6a6366] to-58%" />
      {/* title bar */}
      <div className="flex h-[30px] shrink-0 items-center bg-white pb-px">
        <svg width="17" height="17" viewBox="0 0 17 17" className="ml-[8px]">
          <circle cx="8" cy="8" r="6" fill="none" stroke="#71a436" strokeWidth="3.400" />
          <path d="M8 8l7.500 7.500" stroke="#fff" strokeWidth="4.600" /><path d="M11 11l4.500 4.500" stroke="#71a436" strokeWidth="3.200" /><path d="M7 6.500h4.500l-1.200 1.200 2.500 2.500-2.100 2.100L8.200 9.800 7 11z" fill="#ee7913" />
        </svg>
        <span className="ml-[4px] text-[12px] tracking-[-0.36px]">*Untitled Project — QGIS</span>
        <div className="ml-auto flex items-center pr-[17px]">
          <svg width="10" height="11" viewBox="0 0 10 11" className="mr-[35px]"><path d="M0 5.500h9" stroke="#000" /></svg>
          <svg width="11" height="11" viewBox="0 0 11 11" className="mr-[35px]"><path d="M.5.500h10v10H.5z" fill="none" stroke="#000" /></svg>
          <svg width="11" height="11" viewBox="0 0 11 11"><path d="M.5.500l10 10M10.500.500l-10 10" stroke="#000" strokeWidth="1.100" /></svg>
        </div>
      </div>
      {/* menu bar */}
      <div className="flex h-[20px] shrink-0 items-center border-b border-[#cdd0d6] pl-[10px]">
        {menus.map(([a, u, b, w]) => (
          <span key={a + u + b} className={`shrink-0 whitespace-nowrap tracking-[-0.3px] ${w}`}>{a}<span className="underline underline-offset-2">{u}</span>{b}</span>
        ))}
      </div>
      {/* toolbars */}
      <div className="flex h-[39px] shrink-0 items-center border-b border-[#b4b4b4] bg-linear-to-b from-[#fafafa] to-[#ededed]">
        <Grip w="w-[12px] pl-px" />
        <Slot><Hand /></Slot><Slot><PanSel /></Slot><Slot on><ZoomIn /></Slot><Slot><ZoomOut /></Slot><Slot><ZoomFull /></Slot><Slot><ZoomSel /></Slot><Slot><ZoomLayer /></Slot><Slot><ZoomNative /></Slot><Slot><ZoomLast /></Slot><Slot><ZoomNext /></Slot><Slot><NewMap /></Slot><Slot><New3D /></Slot><Slot><NewBookmark /></Slot><Slot><Bookmarks /></Slot><Slot><Clock /></Slot><Slot><Refresh /></Slot>
        <Grip w="w-[17px] pl-[5px]" /><Slot><SelectDim /></Slot><Arrow w="w-[12px]" dim /><Slot><FormDim /></Slot><Arrow w="w-[12px]" dim /><Slot><Deselect /></Slot><Arrow w="w-[11px]" /><Slot><SelLoc /></Slot>
      </div>
      <div className="flex h-[40px] shrink-0 items-center border-b-2 border-[#bcbcbc] bg-linear-to-b from-[#fafafa] to-[#ededed]">
        <Grip w="w-[12px] pl-px" />
        <Slot><VPlus /></Slot><Slot><RasterPlus /></Slot><Slot><MeshPlus /></Slot><Slot><Comma /></Slot><Slot><FeatherPlus /></Slot><Slot><VBoxPlus /></Slot><Slot><Elephant /></Slot><Arrow w="w-[12px]" />
        <Slot><GlobeMap /></Slot><Slot><GlobePlus /></Slot><Slot><GlobeV /></Slot><Slot><VStar /></Slot><Arrow w="w-[12px]" /><Grip w="w-[16px] pl-[5px]" />
        <Slot><Sources /></Slot><Slot><Geopkg /></Slot><Slot><VStar /></Slot><Slot><FeatherStar /></Slot><Slot><Chip /></Slot><Slot><MeshStar /></Slot><Sep w="w-[7px]" /><Slot><VBoxStar /></Slot><Sep w="w-[10px]" /><Grip w="w-[13px] pl-[3px]" />
        <Slot><Identify /></Slot><Slot><Abacus /></Slot><Slot><Gear /></Slot><Slot><Sigma /></Slot><Slot><TableDim /></Slot><Arrow w="w-[12px]" dim /><Slot><Ruler /></Slot><Arrow w="w-[11px]" /><Slot><Tip /></Slot><Slot><GearDim /></Slot><Arrow w="w-[12px]" dim />
      </div>
      {/* body */}
      <div className="flex h-[579px] shrink-0">
        <div className="flex w-[318px] shrink-0 flex-col">
          <div className="flex h-[19px] items-center pb-px pl-[4px] pr-[2px]">
            <span className="tracking-[-0.35px]">Layers</span>
            <svg width="11" height="11" viewBox="0 0 11 11" fill="none" stroke="#555" className="ml-auto mr-[3px]"><rect x=".5" y=".5" width="10" height="10" rx="2" /><path d="M4.500 4V2.500h4v4H7M2.500 4.500h4v4h-4z" strokeWidth=".9" /></svg>
            <svg width="11" height="11" viewBox="0 0 11 11" fill="none" stroke="#555"><rect x=".5" y=".5" width="10" height="10" rx="2" /><path d="M3 3l5 5M8 3L3 8" strokeWidth="1.500" /></svg>
          </div>
          <div className="flex h-[30px] items-center pb-[3px] pl-[7px]">
            <PIco><path d="M2 9l6 6 4-4-5-5z" fill="#e9c532" /><path d="M3 9l3 6 3-2-4-5z" fill="#d5503c" /><path d="M8 7l3.500 3.500" stroke="#4a7fbd" strokeWidth="2" /><path d="M10 9l5-5" stroke="#b5854a" strokeWidth="2.400" /></PIco>
            <span className="w-[7px]" /><PIco><g stroke="#6e7274" fill="#f4f4f4"><path d="M3 7h6v9H3zM6 4h6v9H6z" /><path d="M9 2h5v9H9z" /></g><rect x="10.500" y="10.500" width="5.500" height="5.500" fill="#fff" stroke="#5a9a62" strokeWidth="1.400" /></PIco>
            <span className="w-[8px]" /><PIco><path d="M1 9c4-6 11-6 15 0-4 5-11 5-15 0z" fill="#f4f4f4" stroke="#8a8f93" /><circle cx="8.500" cy="8.500" r="3.400" fill="#53779c" /><circle cx="8.500" cy="8.500" r="1.500" fill="#1c2a38" /><path d="M12 14h6l-3 3z" fill="#555" /></PIco>
            <span className="w-[7px]" /><PIco><path d="M2 3h13v2l-5 5v6l-3-1v-5L2 5z" fill="#6a93c0" stroke="#456b94" strokeWidth=".8" /><path d="M2 2h13v2H2z" fill="#d6dd3f" /><path d="M12 14h6l-3 3z" fill="#555" /></PIco>
            <span className="w-[7px]" /><PIco><path d="M8 4.500C6 2.500 2.500 3 2.700 5.200c0 1.300 1.500 1.800 3 1.800-2 0-3.500.8-3.500 2.300 0 2.300 4 2.700 6 .7" stroke="#bcbcbc" strokeWidth="1.300" /><path d="M10.500 16v-4c0-2 4-2 4 0v4" stroke="#c4c4c4" strokeWidth="1.300" /></PIco><span className="w-px" /><Arrow w="w-[13px]" dim />
            <span className="w-[5px]" /><PIco><path d="M3.500 3v12M3.500 5h3M3.500 13h3M2 2.500h8" stroke="#888" /><path d="M5.500 3.500h3v3h-3zM5.500 11.500h3v3h-3z" fill="#e8a33a" /><path d="M10 2h3.500v8H16l-4.300 5.500L7.500 10H10z" fill="#4f82ba" stroke="#2f5a88" strokeWidth=".8" /></PIco>
            <span className="w-[7px]" /><PIco><path d="M3.500 3v12M3.500 5h3M3.500 13h3M2 2.500h8" stroke="#888" /><path d="M5.500 3.500h3v3h-3zM5.500 11.500h3v3h-3z" fill="#e8a33a" /><path d="M10 15h3.500V8H16l-4.300-5.500L7.500 8H10z" fill="#4f82ba" stroke="#2f5a88" strokeWidth=".8" /></PIco>
            <span className="w-[6px]" /><PIco><rect x="2.500" y="2.500" width="11" height="11" fill="#f2f2f2" stroke="#777" /><rect x="9.500" y="11" width="6.500" height="5" rx="1.500" fill="#dd4a50" /><path d="M11 13.500h3.500" stroke="#fff" strokeWidth="1.300" /></PIco>
          </div>
          <div className="ml-px flex h-[506px] w-[317px] flex-col border border-[#b3b3b3] bg-white">
            <div className="flex h-[19px] items-center pl-[5px]">
              <svg width="8" height="5"><path d="M0 .3h8L4 4.700z" fill="#5a5a5a" /></svg>
              <span className="ml-[9px]"><Check /></span>
              <svg width="13" height="13" viewBox="0 0 12 12" className="ml-[8px]"><rect width="12" height="12" fill="#dce5ef" /><path d="M0 0h4v4H0zM8 8h4v4H8zM4 4h4v4H4zM8 0h4v4H8z" fill="#2b3f58" /><path d="M4 4h4v4H4zM0 8h4v4H0z" fill="#7494bb" /></svg>
              <span className="ml-[7px] whitespace-nowrap text-[12px] font-bold tracking-[-0.25px] underline underline-offset-2">LiDAR_Elev_HS_Pro</span>
            </div>
          </div>
          <div className="flex items-start font-['DejaVu_Sans_Condensed','Open_Sans',sans-serif] text-[11px]">
            <div className="flex h-[22px] w-[63px] items-center justify-center border border-t-0 border-[#b9b9b9] bg-[#dddddd] pr-[3px] pt-[2px]">Browser</div>
            <div className="flex h-[23px] w-[56px] items-center justify-center rounded-b-[3px] border border-l-0 border-t-0 border-[#a9a9a9] bg-[#f8f8f8] pt-[3px]">Layers</div>
          </div>
        </div>
        <div className="flex w-[6px] shrink-0 items-center justify-center">
          <svg width="2" height="20">{Array.from({ length: 7 }, (_, i) => <rect key={i} y={i * 3} width="1" height="1" fill="#aaa" />)}</svg>
        </div>
        <div className="w-[962px] overflow-hidden border-b border-l border-[#a9a9a9] bg-white"><Terrain /></div>
      </div>
      {/* status bar */}
      <div className="flex min-h-0 flex-1 items-center whitespace-nowrap pt-[2px] font-['DejaVu_Sans_Condensed','Open_Sans',sans-serif] text-[11px]">
        <div className="ml-[4px] flex h-[22px] w-[200px] shrink-0 items-center rounded-[3px] border border-[#adadad] bg-white text-[#777]">
          <svg width="14" height="14" viewBox="0 0 14 14" fill="none" stroke="#9a9a9a" strokeWidth="1.500" className="ml-[8px] mr-[5px]"><circle cx="5.500" cy="5.500" r="4.200" /><path d="M8.700 8.700l4.300 4" /></svg>
          <span>Type to locate (Ctrl+K)</span>
        </div>
        <span className="ml-[254px] w-[57px] shrink-0">Coordinate</span>
        <span className="flex h-[22px] w-[107px] shrink-0 items-center rounded-[3px] border border-[#adadad] bg-white pl-[6px]">-8131833,5050057</span>
        <span className="flex w-[32px] shrink-0 pl-[4px]">
          <svg width="17" height="17" viewBox="0 0 17 17" fill="none" stroke="#444"><ellipse cx="4.500" cy="6" rx="2.800" ry="4.500" transform="rotate(-30 5 5)" fill="#ddd" strokeWidth="1.400" /><path d="M3 3l4 5M5 2l4 6M10 5l5-3" strokeWidth="1.300" /><circle cx="10" cy="11" r="4.500" fill="#eee" strokeWidth="1.600" /><path d="M6.500 8.500l7 5M8 13.500l5-5M7 11h6" strokeWidth="1.300" /></svg>
        </span>
        <span className="w-[29px] shrink-0">Scale</span>
        <span className="flex h-[22px] w-[80px] shrink-0 items-center overflow-hidden rounded-[3px] border border-[#adadad] bg-white pl-[4px]">
          <span className="w-[55px]">1:1819745</span>
          <span className="flex h-full flex-1 items-center justify-center border-l border-[#b5b5b5] bg-[#f4f4f4]"><svg width="8" height="5"><path d="M0 .3h8L4 4.700z" fill="#5a5a5a" /></svg></span>
        </span>
        <span className="flex w-[33px] shrink-0 pl-[13px]"><svg width="13" height="15" viewBox="0 0 13 15"><path d="M3 8V4.500a3.500 3.500 0 0 1 7 0V8" fill="none" stroke="#777" strokeWidth="1.500" /><rect x=".5" y="7" width="12" height="8" rx="1" fill="#5c5c5c" /></svg></span>
        <span className="w-[48px] shrink-0 tracking-[-0.15px]">Magnifier</span>
        <span className="flex h-[22px] w-[84px] shrink-0 items-center justify-between overflow-hidden rounded-[3px] border border-[#adadad] bg-white pl-[4px]">100%<Spin /></span>
        <span className="ml-[8px] w-[51px] shrink-0">Rotation</span>
        <span className="mr-[6px] flex h-[22px] w-[84px] shrink-0 items-center justify-between overflow-hidden rounded-[3px] border border-[#adadad] bg-white pl-[4px]">0.0 °<Spin /></span>
        <Check />
        <span className="ml-[4px] w-[52px] shrink-0">Render</span>
        <svg width="15" height="15" viewBox="0 0 14 14" className="shrink-0" fill="none"><circle cx="7" cy="7" r="5.500" fill="#a2a2a2" stroke="#707070" /><path d="M0 7h14M7 0v14M2 4h10M2 10h10" stroke="#707070" strokeWidth=".8" /><ellipse cx="7" cy="7" rx="3" ry="6" stroke="#707070" strokeWidth=".8" /></svg>
        <span className="ml-px w-[77px] shrink-0">EPSG:3857</span>
        <svg width="17" height="15" viewBox="0 0 17 15" className="shrink-0"><path d="M8.500 0C13 0 16.500 2.500 16.500 6S14.500 11 13 11.500L14 15l-4-3C4 12.500.5 10 .5 6S4 0 8.500 0z" fill="#5e5e5e" /><g fill="#efefef"><rect x="4" y="5" width="2" height="2" /><rect x="7.500" y="5" width="2" height="2" /><rect x="11" y="5" width="2" height="2" /></g></svg>
        <svg width="11" height="11" viewBox="0 0 11 11" className="ml-auto mr-px mt-auto shrink-0" fill="#b5b5b5"><path d="M9 0h1v1H9zM6 3h1v1H6zM9 3h1v1H9zM3 6h1v1H3zM6 6h1v1H6zM9 6h1v1H9zM0 9h1v1H0zM3 9h1v1H3zM6 9h1v1H6zM9 9h1v1H9z" /></svg>
      </div>
    </div>
  );
}
